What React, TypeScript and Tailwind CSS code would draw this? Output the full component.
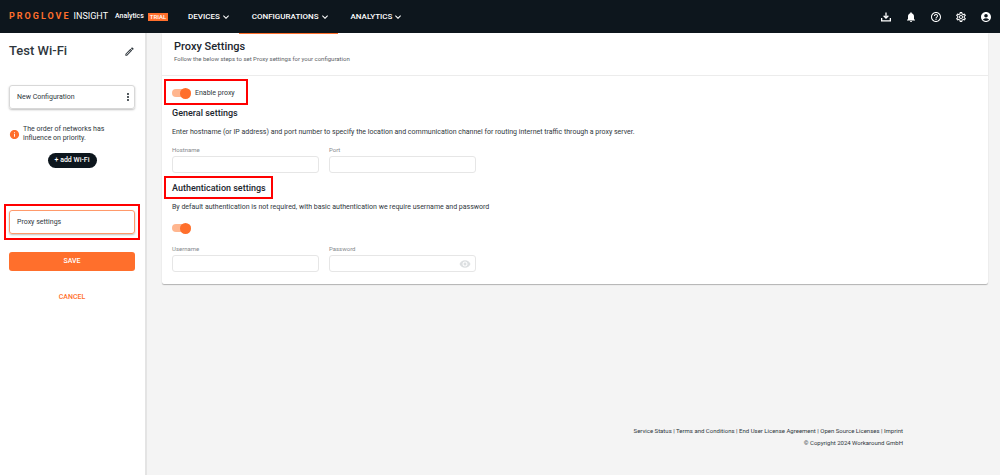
import { useState } from 'react';
import type { ReactNode } from 'react';
import {
  MdAccountCircle,
  MdHelpOutline,
  MdInfo,
  MdKeyboardArrowDown,
  MdMoreVert,
  MdNotifications,
  MdOutlineEdit,
  MdOutlineSettings,
  MdVisibility,
} from 'react-icons/md';

function DownloadIcon() {
  return (
    <svg viewBox="0 0 24 24" className="size-3" fill="currentColor" aria-hidden="true">
      <path d="M10.7 3h2.6v8.2l2.6-2.6 1.7 1.8L12 16l-5.6-5.6 1.7-1.8 2.6 2.6z" />
      <path d="M2 14h2.6v4.4h14.8V14H22v7H2z" />
    </svg>
  );
}

function NavItem({ label, active }: { label: string; active?: boolean }) {
  return (
    <button
      type="button"
      className={
        active
          ? 'relative flex h-full items-center pr-[7px] pl-[13px] after:absolute after:inset-x-0 after:top-full after:h-px after:bg-[#ff6f2c]'
          : 'relative flex h-full items-center pr-[7px] pl-[13px]'
      }
    >
      {label}
      <MdKeyboardArrowDown className="size-3" />
    </button>
  );
}

function Toggle({ label, text }: { label: string; text?: string }) {
  const [on, setOn] = useState(true);
  return (
    <label className="flex h-3 w-fit cursor-pointer items-center gap-1 text-[7px]">
      <span className="relative flex h-3 w-[19px] items-center">
        <input
          type="checkbox"
          aria-label={label}
          checked={on}
          onChange={() => setOn(!on)}
          className="peer h-2 w-full appearance-none rounded-full bg-[#d5d5d5] checked:bg-[#ffb68f]"
        />
        <span className="pointer-events-none absolute left-0 size-[11px] rounded-full bg-[#9a9a9a] peer-checked:right-0 peer-checked:left-auto peer-checked:bg-[#ff6f2c]" />
      </span>
      {text}
    </label>
  );
}

function Field({ id, label, type = 'text', children }: { id: string; label: string; type?: string; children?: ReactNode }) {
  return (
    <div className="w-[147px]">
      <label htmlFor={id} className="block text-[6px] leading-2 text-[#85898c]">
        {label}
      </label>
      <div className="relative mt-[2px]">
        <input id={id} type={type} className="block h-[17px] w-full rounded-[3px] border border-[#e6e6e6] bg-white px-2 text-[7px] outline-none" />
        {children}
      </div>
    </div>
  );
}

function Highlight({ className }: { className: string }) {
  return <span aria-hidden="true" className={'pointer-events-none absolute border-2 border-[#ff0000] ' + className} />;
}

export default function App() {
  return (
    <div className="flex min-h-screen flex-col bg-[#f4f4f4] font-['Roboto','Liberation_Sans',sans-serif] text-[#2f373d]">
      <header className="relative z-10 flex h-[33px] items-center bg-[#0d161d] pr-2 pl-[9px] text-white">
        <a href="#home" className="flex w-[166px] items-center">
          <span className="text-[9px] font-bold tracking-[2px] text-[#ff6f2c]">PROGLOVE</span>
          <span className="ml-[3px] text-[9px]">INSIGHT</span>
          <span className="ml-[7px] text-[7px] font-medium">Analytics</span>
          <span className="ml-[4px] bg-[#ff6f2c] px-[2px] text-[6px] leading-2 font-medium">TRIAL</span>
        </a>
        <nav className="flex h-full items-center text-[8px] font-medium">
          <NavItem label="DEVICES" />
          <NavItem label="CONFIGURATIONS" active />
          <NavItem label="ANALYTICS" />
        </nav>
        <div className="ml-auto flex items-center gap-[13px]">
          <button type="button" aria-label="Downloads"><DownloadIcon /></button>
          <button type="button" aria-label="Notifications"><MdNotifications className="size-3" /></button>
          <button type="button" aria-label="Help"><MdHelpOutline className="size-3" /></button>
          <button type="button" aria-label="Settings"><MdOutlineSettings className="size-3" /></button>
          <button type="button" aria-label="Account"><MdAccountCircle className="size-3" /></button>
        </div>
      </header>

      <div className="flex flex-1">
        <aside className="w-[147px] shrink-0 border-r-2 border-[#e4e4e4] bg-white pr-[10px] pl-[9px]">
          <div className="flex h-9 items-center justify-between">
            <h1 className="text-[13px] font-medium">Test Wi-Fi</h1>
            <button type="button" aria-label="Edit name"><MdOutlineEdit className="size-[11px]" /></button>
          </div>

          <div className="mt-4 flex h-6 items-center justify-between rounded-[3px] border border-[#d8d8d8] pl-[7px] text-[7px] shadow-[0_1px_2px_#00000040]">
            <button type="button">New Configuration</button>
            <button type="button" aria-label="More options"><MdMoreVert className="size-3" /></button>
          </div>

          <p className="mt-4 flex items-center gap-[3px] text-[7px] leading-[9px]">
            <MdInfo className="size-[11px] shrink-0 text-[#ff6f2c]" />
            <span>The order of networks has<br />influence on priority.</span>
          </p>
          <button type="button" className="mx-auto mt-[10px] block h-[15px] rounded-full bg-[#0d161d] px-[7px] text-[7px] font-medium text-white">
            + add Wi-Fi
          </button>

          <div className="relative mt-[42px]">
            <button type="button" className="block h-6 w-full rounded-[3px] border border-[#ff9a6b] pl-[7px] text-left text-[7px] shadow-[0_1px_2px_#00000040]">
              Proxy settings
            </button>
            <Highlight className="-inset-x-[5px] -inset-y-[6px]" />
          </div>

          <button type="button" className="mt-[18px] block h-[19px] w-full rounded-[3px] bg-[#ff6f2c] text-[7px] font-medium text-white">
            SAVE
          </button>
          <button type="button" className="mx-auto mt-5 block text-[7px] leading-3 font-medium text-[#ff6f2c]">
            CANCEL
          </button>
        </aside>

        <div className="flex flex-1 flex-col pr-3 pl-[15px]">
          <main className="rounded-b-xs bg-white pb-3 shadow-[0_1px_1px_#00000045]">
            <div className="h-[43px] border-b border-[#ececec] px-3 pt-[7px]">
              <h2 className="text-[11px] leading-[14px] font-medium text-[#1c262e]">Proxy Settings</h2>
              <p className="text-[6px] leading-[10px] text-[#5c6266]">Follow the below steps to set Proxy settings for your configuration</p>
            </div>

            <div className="px-[10px]">
              <div className="relative mt-[11px] w-fit">
                <Toggle label="Enable proxy" text="Enable proxy" />
                <Highlight className="-top-2 -right-[13px] -bottom-[6px] -left-2" />
              </div>
              <h3 className="mt-2 text-[9px] leading-3 font-medium text-[#1c262e]">General settings</h3>
              <p className="mt-[7px] text-[7px] leading-3">
                Enter hostname (or IP address) and port number to specify the location and communication channel for routing internet traffic through a proxy server.
              </p>
              <div className="mt-2 flex gap-[10px]">
                <Field id="hostname" label="Hostname" />
                <Field id="port" label="Port" />
              </div>

              <div className="relative mt-[9px] w-fit">
                <h3 className="text-[9px] leading-3 font-medium text-[#1c262e]">Authentication settings</h3>
                <Highlight className="-top-[6px] -right-[7px] -bottom-[5px] -left-2" />
              </div>
              <p className="mt-[7px] text-[7px] leading-3">
                By default authentication is not required, with basic authentication we require username and password
              </p>
              <div className="mt-[9px]">
                <Toggle label="Require authentication" />
              </div>
              <div className="mt-[11px] flex gap-[10px]">
                <Field id="username" label="Username" />
                <Field id="password" label="Password" type="password">
                  <button type="button" aria-label="Show password" className="absolute inset-y-0 right-[5px] text-[#dcdfe1]">
                    <MdVisibility className="size-3" />
                  </button>
                </Field>
              </div>
            </div>
          </main>

          <footer className="mt-auto pr-[85px] pb-[26px] text-right text-[6px] leading-3">
            <p>
              <a href="#status">Service Status</a> | <a href="#terms">Terms and Conditions</a> | <a href="#eula">End User License Agreement</a> |{' '}
              <a href="#licenses">Open Source Licenses</a> | <a href="#imprint">Imprint</a>
            </p>
            <p>© Copyright 2024 Workaround GmbH</p>
          </footer>
        </div>
      </div>
    </div>
  );
}
